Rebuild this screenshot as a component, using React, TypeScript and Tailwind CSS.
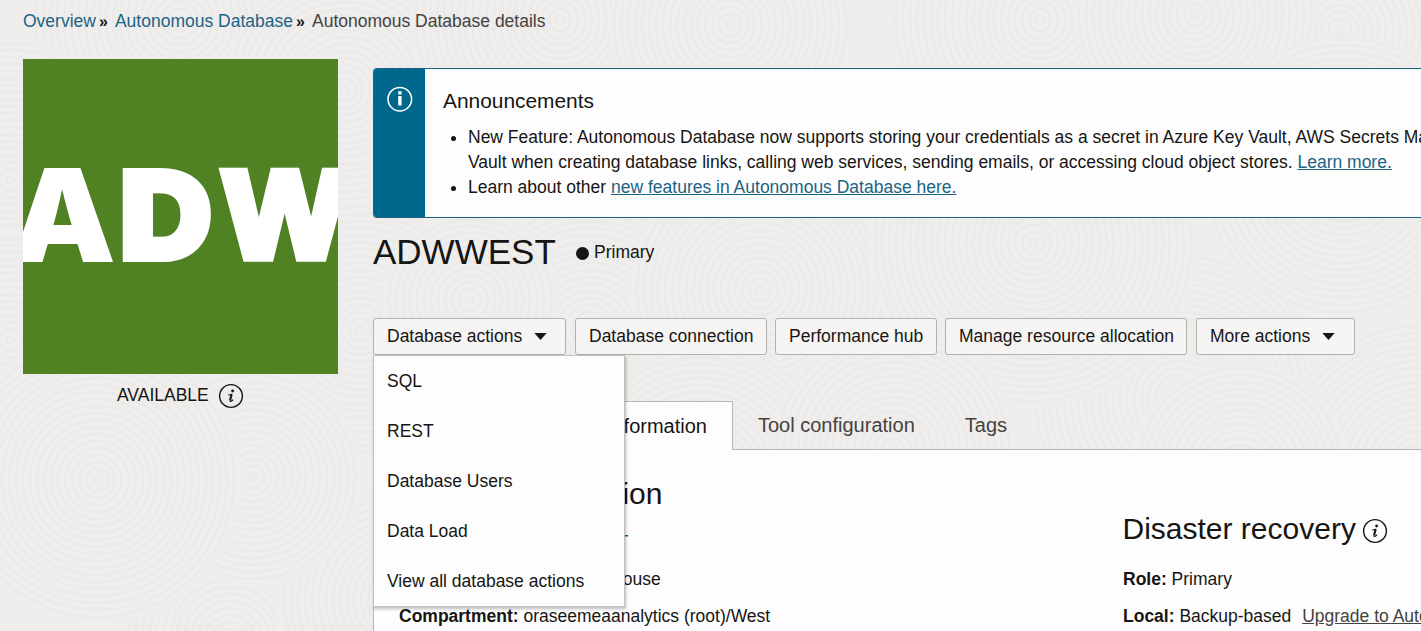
import React from "react";

const swirls: [number, number, number][] = [
  [180, 20, 150],
  [345, 90, 120],
  [560, 20, 150],
  [730, 25, 120],
  [1340, 30, 140],
  [1040, 20, 150],
  [1195, 15, 120],
  [10, 180, 140],
  [360, 330, 130],
  [590, 330, 140],
  [470, 300, 90],
  [760, 290, 130],
  [1180, 400, 150],
  [1033, 243, 165],
  [1343, 175, 140],
  [700, 480, 140],
  [1420, 470, 150],
  [1240, 470, 110],
  [893, 450, 125],
  [10, 340, 110],
  [230, 640, 110],
  [400, 600, 125],
  [253, 477, 110],
  [97, 480, 145],
];

function Texture() {
  return (
    <svg className="absolute inset-0 -z-10" width="1421" height="631" aria-hidden="true">
      {swirls.map(([x, y, r], i) => (
        <g key={i} fill="none" stroke="#ebeae8" strokeWidth="2.6">
          <circle cx={x} cy={y} r={r} fill="#efeeec" stroke="none" />
          {Array.from({ length: Math.floor(r / 7) }, (_, k) => (
            <circle key={k} cx={x} cy={y} r={4 + k * 7} />
          ))}
        </g>
      ))}
    </svg>
  );
}

function InfoIcon() {
  return (
    <svg width="26" height="26" viewBox="0 0 26 26" className="shrink-0" aria-hidden="true">
      <circle cx="13" cy="13" r="11.4" fill="none" stroke="#161513" strokeWidth="1.4" />
      <circle cx="14.6" cy="8" r="1.4" fill="#161513" />
      <path d="M10.2 12.2 L14 11.2" stroke="#161513" strokeWidth="1" />
      <path d="M13.7 11.1 L12 17.6" stroke="#161513" strokeWidth="2.1" />
      <path d="M11.6 18.2 Q13.6 18.8 15 16.6" fill="none" stroke="#161513" strokeWidth="1.1" />
    </svg>
  );
}

function Caret() {
  return (
    <svg width="13" height="7" viewBox="0 0 13 7" aria-hidden="true">
      <path d="M0.3 0 H12.7 L6.5 7 Z" fill="#161513" />
    </svg>
  );
}

function Button({ label, caret, width }: { label: string; caret?: boolean; width: string }) {
  return (
    <button
      className={`flex h-[37px] shrink-0 items-center gap-[12px] rounded-[3px] border border-[#b3b1ae] bg-[#f6f5f3] pl-[13px] whitespace-nowrap ${width}`}
    >
      {label}
      {caret && <Caret />}
    </button>
  );
}

const actions = ["SQL", "REST", "Database Users", "Data Load", "View all database actions"];

export default function App() {
  return (
    <div className="relative isolate h-[631px] w-[1421px] overflow-hidden bg-[#efeeec] font-['Liberation_Sans',Arial,sans-serif] text-[17.5px] leading-[25px] text-[#161513]">
      <Texture />
      <nav className="flex h-[59px] items-start pt-[9px] pl-[23px] whitespace-nowrap text-[#1b6485]">
        <a>Overview</a>
        <span className="w-[19px] pl-[3px] text-[16px] font-bold text-[#161513]">»</span>
        <a>Autonomous Database</a>
        <span className="w-[19px] pl-[3px] text-[16px] font-bold text-[#161513]">»</span>
        <span className="text-[#45423f]">Autonomous Database details</span>
      </nav>

      <div className="flex gap-[35px] pl-[23px]">
        <aside className="w-[315px] shrink-0">
          <svg width="315" height="315" viewBox="0 0 315 315" className="block bg-[#508223]">
            <text className="font-['Inter'] font-black" fill="#fff" fontSize="129.3" x="-13" y="203" textLength="106" lengthAdjust="spacingAndGlyphs">A</text>
            <g fill="#fff" stroke="#fff" strokeMiterlimit="2.5" fontWeight="bold">
              <text strokeWidth="12" fontSize="119.2" x="97.7" y="197" textLength="89" lengthAdjust="spacingAndGlyphs">D</text>
              <text strokeWidth="9.5" fontSize="122.8" x="201.7" y="198.2" textLength="120" lengthAdjust="spacingAndGlyphs">W</text>
            </g>
          </svg>
          <div className="flex items-center gap-[9px] pt-[9px] pl-[94px]">
            <span className="-mt-[2px]">AVAILABLE</span>
            <InfoIcon />
          </div>
        </aside>

        <main className="w-[1048px] shrink-0 pt-[9px]">
          <section className="flex h-[150px] overflow-hidden rounded-l-[4px] border border-r-0 border-[#1b6485] bg-[#fdfdfd]">
            <div className="flex w-[51px] shrink-0 justify-center bg-[#00688c] pt-[17px]">
              <svg width="26" height="26" viewBox="0 0 26 26" aria-hidden="true">
                <circle cx="12.8" cy="13.2" r="11.8" fill="none" stroke="#fff" strokeWidth="1.5" />
                <path d="M11.2 5.3h3.4v3.1h-3.4zM11.2 10h3.4v9.6h-3.4z" fill="#fff" />
              </svg>
            </div>
            <div className="w-[1100px] shrink-0 pt-[19px] pl-[18px] whitespace-nowrap">
              <h2 className="text-[20.9px] leading-[26px]">Announcements</h2>
              <ul className="mt-[11px] list-disc pl-[25px]">
                <li>
                  New Feature: Autonomous Database now supports storing your credentials as a secret in Azure Key Vault, AWS Secrets Manager
                  <br />
                  Vault when creating database links, calling web services, sending emails, or accessing cloud object stores.{" "}
                  <a className="text-[#1b6485] underline">Learn more.</a>
                </li>
                <li>
                  Learn about other <a className="text-[#1b6485] underline">new features in Autonomous Database here.</a>
                </li>
              </ul>
            </div>
          </section>

          <div className="flex h-[100px] pt-[14px]">
            <h1 className="w-[203px] text-[35px] leading-[40px]">ADWWEST</h1>
            <div className="flex h-[40px] items-center gap-[5px]">
              <span className="mt-[3px] size-[13px] rounded-full bg-[#161513]" />
              <span>Primary</span>
            </div>
          </div>

          <div className="relative flex">
            <Button label="Database actions" caret width="w-[193px] mr-[9px]" />
            <Button label="Database connection" width="w-[192px] mr-[8px]" />
            <Button label="Performance hub" width="w-[162px] mr-[8px]" />
            <Button label="Manage resource allocation" width="w-[242px] mr-[9px]" />
            <Button label="More actions" caret width="w-[159px]" />
            <ul className="absolute top-[37px] left-0 z-10 w-[252px] border border-t border-[#c2bfbb] bg-[#fdfdfd] shadow-[1px_2px_3px_rgba(0,0,0,0.25)]">
              {actions.map((a) => (
                <li key={a} className="flex h-[50px] items-center pl-[13px]">
                  {a}
                </li>
              ))}
            </ul>
          </div>

          <div className="mt-[46px] flex h-[49px] text-[20px]">
            <div className="flex w-[360px] shrink-0 items-center border border-b-0 border-[#bcb6b1] bg-[#fdfdfd] pl-[25px] whitespace-nowrap">
              Autonomous Database information
            </div>
            <div className="flex grow gap-[50px] border-b border-[#bcb6b1] pt-[12px] pl-[25px] text-[#45423f]">
              <span>Tool configuration</span>
              <span>Tags</span>
            </div>
          </div>

          <div className="flex h-[200px] border-l border-[#bcb6b1] bg-[#fdfdfd] pl-[25px] whitespace-nowrap">
            <section className="w-[724px] shrink-0 pt-[24px]">
              <h2 className="text-[30px] leading-[40px]">General information</h2>
              <dl className="mt-[16px] flex flex-col gap-[12px]">
                <div><b>Database name:</b> <a className="text-[#1b6485]">ADWWEST</a></div>
                <div><b>Workload type:</b> Data Warehouse</div>
                <div><b>Compartment:</b> oraseemeaanalytics (root)/West</div>
              </dl>
            </section>
            <section className="pt-[59px]">
              <div className="flex items-center gap-[6px]">
                <h2 className="-ml-[0.5px] text-[30px] leading-[40px]">Disaster recovery</h2>
                <span className="pt-[4px]"><InfoIcon /></span>
              </div>
              <dl className="mt-[18px] flex flex-col gap-[12px]">
                <div><b>Role:</b> Primary</div>
                <div>
                  <b>Local:</b> Backup-based <a className="ml-[6px] text-[#45423f] underline">Upgrade to Autonomous Data Guard</a>
                </div>
              </dl>
            </section>
          </div>
        </main>
      </div>
    </div>
  );
}
